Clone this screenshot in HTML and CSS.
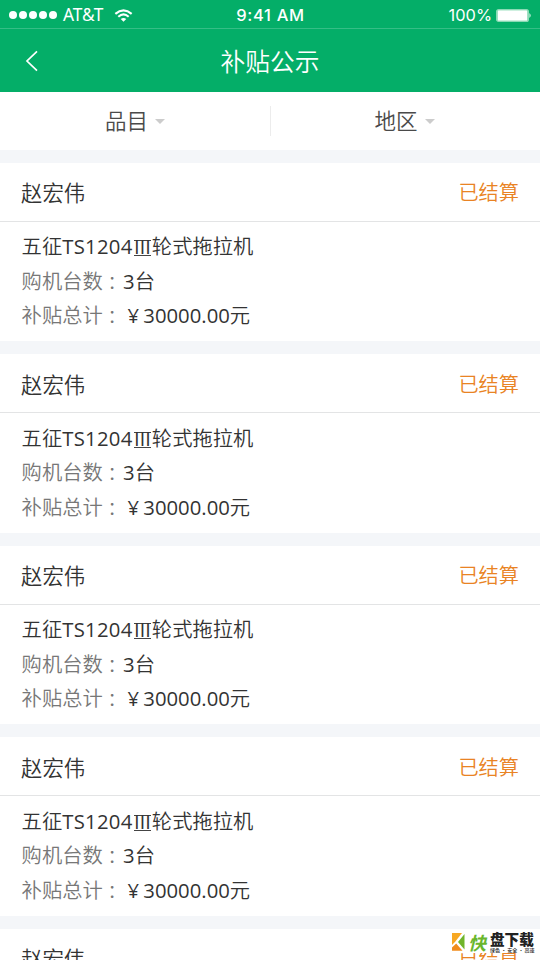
FILE: index.html
```html
<!DOCTYPE html>
<html lang="zh-CN">
<head>
<meta charset="utf-8">
<title>补贴公示</title>
<link rel="stylesheet" href="styles.css">
</head>
<body>
<div class="screen">
  <header class="status">
    <div class="carrier">
      <div class="dots"><i></i><i></i><i></i><i></i><i></i></div>
      <span class="net">AT&amp;T</span>
      <svg class="wifi" width="19" height="13" viewBox="0 0 20 14" fill="none" stroke="#fff"><path d="M1.2 5.2Q10-2.2 18.8 5.2" stroke-width="2.3"/><path d="M4.4 8.3Q10 3.4 15.6 8.3" stroke-width="2.3"/><path d="M7 10.9Q10 8.5 13 10.9L10 13.7Z" fill="#fff" stroke="none"/></svg>
    </div>
    <span class="time">9:41 AM</span>
    <div class="power">
      <span class="pct">100%</span>
      <svg width="36" height="13" viewBox="0 0 36 13"><rect x=".6" y=".6" width="31.8" height="11.8" rx="2" fill="#a5e3c6" stroke="#8bdab5" stroke-width="1.2"/><rect x="2" y="1.6" width="29" height="9.8" rx=".5" fill="#fff"/><path d="M33.4 4Q36 6.5 33.4 9Z" fill="#d5f3e4"/></svg>
    </div>
  </header>
  <nav class="nav">
    <svg class="back" width="14" height="22" viewBox="0 0 14 22" fill="none" stroke="#fff" stroke-width="1.7"><path d="M12 1.3 2 11l10 9.7"/></svg>
    <h1>补贴公示</h1>
  </nav>
  <div class="filters">
    <div class="filter"><span>品目</span><i class="caret"></i></div>
    <div class="filter"><span>地区</span><i class="caret"></i></div>
  </div>
  <main>
    <section class="card">
      <div class="head"><span class="name">赵宏伟</span><span class="state">已结算</span></div>
      <div class="body">
        <p>五征<span class="model">TS1204</span><span class="roman">Ⅲ</span>轮式拖拉机</p>
        <p><span class="label">购机台数<span class="colon" lang="zh-TW">：</span></span><span class="num">3</span>台</p>
        <p><span class="label">补贴总计<span class="colon" lang="zh-TW">：</span></span><span class="yen">¥</span><span class="num">30000.00</span>元</p>
      </div>
    </section>
    <section class="card">
      <div class="head"><span class="name">赵宏伟</span><span class="state">已结算</span></div>
      <div class="body">
        <p>五征<span class="model">TS1204</span><span class="roman">Ⅲ</span>轮式拖拉机</p>
        <p><span class="label">购机台数<span class="colon" lang="zh-TW">：</span></span><span class="num">3</span>台</p>
        <p><span class="label">补贴总计<span class="colon" lang="zh-TW">：</span></span><span class="yen">¥</span><span class="num">30000.00</span>元</p>
      </div>
    </section>
    <section class="card">
      <div class="head"><span class="name">赵宏伟</span><span class="state">已结算</span></div>
      <div class="body">
        <p>五征<span class="model">TS1204</span><span class="roman">Ⅲ</span>轮式拖拉机</p>
        <p><span class="label">购机台数<span class="colon" lang="zh-TW">：</span></span><span class="num">3</span>台</p>
        <p><span class="label">补贴总计<span class="colon" lang="zh-TW">：</span></span><span class="yen">¥</span><span class="num">30000.00</span>元</p>
      </div>
    </section>
    <section class="card">
      <div class="head"><span class="name">赵宏伟</span><span class="state">已结算</span></div>
      <div class="body">
        <p>五征<span class="model">TS1204</span><span class="roman">Ⅲ</span>轮式拖拉机</p>
        <p><span class="label">购机台数<span class="colon" lang="zh-TW">：</span></span><span class="num">3</span>台</p>
        <p><span class="label">补贴总计<span class="colon" lang="zh-TW">：</span></span><span class="yen">¥</span><span class="num">30000.00</span>元</p>
      </div>
    </section>
    <section class="card">
      <div class="head"><span class="name">赵宏伟</span><span class="state">已结算</span></div>
    </section>
  </main>
  <div class="mark">
    <svg width="13" height="18" viewBox="0 0 13 18"><path d="M0 0H10L3.4 8.6 0 12Z" fill="#f7a823"/><path d="M12.5 1V16.5L6 9Z" fill="#70b52b"/><path d="M4.2 10.4 10.5 17.8H0V14.4Z" fill="#f08c1c"/></svg>
    <span class="kuai">快</span>
    <div class="words"><b>盘下载</b><small>绿色 · 安全 · 高速</small></div>
  </div>
</div>
</body>
</html>
```
FILE: styles.css
```css
* { box-sizing: border-box; margin: 0; padding: 0; }
body { font-family: "Open Sans", "Noto Sans CJK SC", sans-serif; background: #f4f6f9; }
.screen { position: relative; width: 540px; height: 960px; overflow: hidden; background: #f4f6f9; }
.status { display: grid; grid-template-columns: 1fr auto 1fr; align-items: center; height: 29px; padding: 2px 8px 0 9px; background: #04ae68; border-bottom: 1px solid #35be86; color: #fff; font: 16px/26px Inter, sans-serif; }
.carrier { display: flex; align-items: center; }
.dots { display: flex; gap: 2px; }
.dots i { width: 8px; height: 8px; border-radius: 50%; background: #fff; }
.net { margin-left: 6px; font: 17.3px/26px "Noto Sans", sans-serif; }
.wifi { margin-left: 11px; }
.time { font-weight: 500; font-size: 16.5px; letter-spacing: .7px; }
.power { display: flex; align-items: center; justify-content: flex-end; gap: 4px; }
.pct { font-size: 16.4px; }
.nav { position: relative; display: flex; align-items: center; justify-content: center; height: 63px; background: #04ae68; color: #fff; }
.back { position: absolute; left: 25px; top: 21px; }
.nav h1 { font-size: 24.7px; font-weight: 350; line-height: 60px; padding-top: 2px; }
.filters { display: flex; align-items: center; height: 58px; background: #fff; color: #4a4a4a; }
.filter { flex: none; width: 270px; display: flex; align-items: center; justify-content: center; gap: 7px; height: 30px; font-size: 21.5px; font-weight: 350; }
.filter span { line-height: 30px; padding-bottom: 1px; }
.filter + .filter { border-left: 1px solid #ececec; padding-right: 2px; }
.caret { border: 5px solid transparent; border-top-color: #ccc; border-bottom: 0; }
.card { margin-top: 12.7px; height: 178.8px; background: #fff; color: #333; }
.head { display: flex; align-items: center; justify-content: space-between; height: 59px; padding: 0 21px; border-bottom: 1px solid #e3e4e5; font-size: 21.4px; }
.state { color: #e98324; font-size: 20.2px; }
.body { padding: 7.4px 21.6px; font-size: 20.3px; line-height: 34px; white-space: nowrap; }
.body p { height: 34.4px; }
.body p:first-child { height: 34.8px; }
.name, .state, .body { font-weight: 350; }
.label { color: #777; }
.colon { display: inline-block; transform: translate(-1px, 1.5px) scale(.9); font-family: "Noto Sans CJK TC", sans-serif; line-height: 1; }
.model { font-weight: 400; letter-spacing: .3px; }
.num { font-weight: 400; }
.roman { display: inline-block; width: 17px; height: 16px; margin: 0 1px 0 1.2px; border: solid #444; border-width: 1.4px 0; font-size: 19.4px; line-height: 12px; text-align: center; text-indent: -1.2px; vertical-align: 0; }
.yen { display: inline-block; width: 20.3px; line-height: 1; text-align: center; font-weight: 400; }
.mark { position: absolute; left: 450px; top: 931px; display: flex; align-items: center; gap: 3px; height: 22px; padding: 0 5px 0 2px; background: #fff; color: #222; }
.kuai { width: 19px; color: #69b62c; font: italic 700 18px/20px "Noto Sans CJK SC", sans-serif; }
.words { display: flex; flex-direction: column; gap: 2px; }
.words b { font: 900 14.6px/12px "Noto Sans CJK SC", sans-serif; }
.words small { font: 500 5px/5px "Noto Sans CJK SC", sans-serif; white-space: nowrap; }
```
